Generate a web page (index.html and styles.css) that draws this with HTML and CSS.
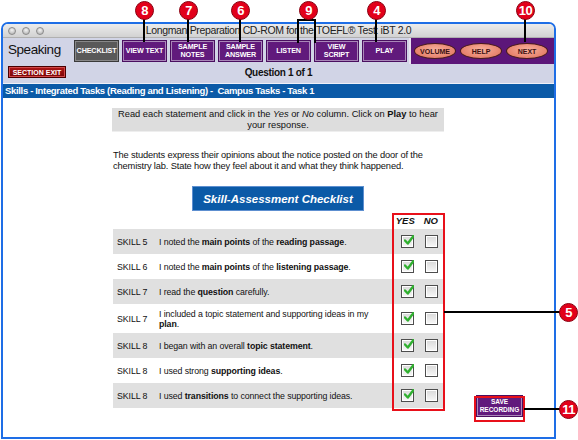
FILE: index.html
```html
<!DOCTYPE html>
<html>
<head>
<meta charset="utf-8">
<link rel="stylesheet" href="styles.css">
</head>
<body>
<div class="window">
  <div class="titlebar">
    <div class="lights"><span></span><span></span><span></span></div>
    <div class="title">Longman Preparation CD-ROM for the TOEFL® Test: iBT 2.0</div>
    <div></div>
  </div>
  <div class="toolbar">
    <div class="tool-row">
      <div class="section-name">Speaking</div>
      <div class="tools">
        <div class="btn gray">CHECKLIST</div>
        <div class="btn">VIEW TEXT</div>
        <div class="btn">SAMPLE<br>NOTES</div>
        <div class="btn">SAMPLE<br>ANSWER</div>
        <div class="btn">LISTEN</div>
        <div class="btn">VIEW<br>SCRIPT</div>
        <div class="btn">PLAY</div>
      </div>
      <div class="panel">
        <div class="oval">VOLUME</div>
        <div class="oval">HELP</div>
        <div class="oval">NEXT</div>
      </div>
    </div>
    <div class="tool-row2">
      <div class="exit">SECTION EXIT</div>
      <div class="question">Question 1 of 1</div>
      <div></div>
    </div>
  </div>
  <div class="crumb">Skills - Integrated Tasks (Reading and Listening) -&nbsp; Campus Tasks - Task 1</div>
  <div class="content">
    <div class="instructions">Read each statement and click in the <i>Yes</i> or <i>No</i> column. Click on <b>Play</b> to hear<br>your response.</div>
    <p class="prompt">The students express their opinions about the notice posted on the door of the chemistry lab. State how they feel about it and what they think happened.</p>
    <div class="heading-wrap"><div class="heading">Skill-Assessment Checklist</div></div>
    <div class="bottom">
      <div class="checklist">
        <div class="head"><span>YES</span><span>NO</span></div>
        <div class="row shade"><span class="skill">SKILL 5</span><span class="text">I noted the <b>main points</b> of the <b>reading passage</b>.</span><span class="boxes"><span class="cb on"></span><span class="cb"></span></span></div>
        <div class="row"><span class="skill">SKILL 6</span><span class="text">I noted the <b>main points</b> of the <b>listening passage</b>.</span><span class="boxes"><span class="cb on"></span><span class="cb"></span></span></div>
        <div class="row shade"><span class="skill">SKILL 7</span><span class="text">I read the <b>question</b> carefully.</span><span class="boxes"><span class="cb on"></span><span class="cb"></span></span></div>
        <div class="row tall"><span class="skill">SKILL 7</span><span class="text">I included a topic statement and supporting ideas in my <b>plan</b>.</span><span class="boxes"><span class="cb on"></span><span class="cb"></span></span></div>
        <div class="row shade"><span class="skill">SKILL 8</span><span class="text">I began with an overall <b>topic statement</b>.</span><span class="boxes"><span class="cb on"></span><span class="cb"></span></span></div>
        <div class="row"><span class="skill">SKILL 8</span><span class="text">I used strong <b>supporting ideas</b>.</span><span class="boxes"><span class="cb on"></span><span class="cb"></span></span></div>
        <div class="row shade"><span class="skill">SKILL 8</span><span class="text">I used <b>transitions</b> to connect the supporting ideas.</span><span class="boxes"><span class="cb on"></span><span class="cb"></span></span></div>
      </div>
      <div class="save">SAVE<br>RECORDING</div>
    </div>
  </div>
</div>

<div class="redbox rb-yesno"></div>
<div class="redbox rb-save"></div>

<div class="callout c8"><span class="num">8</span></div>
<div class="callout c7"><span class="num">7</span></div>
<div class="callout c6"><span class="num">6</span></div>
<div class="callout c9"><span class="num">9</span></div>
<div class="callout c4"><span class="num">4</span></div>
<div class="callout c10"><span class="num">10</span></div>
<div class="bracket9"></div>
<div class="side c5"><span class="num">5</span></div>
<div class="side c11"><span class="num">11</span></div>
</body>
</html>
```

FILE: styles.css
```css
* { box-sizing: border-box; }
html, body { margin: 0; padding: 0; }
body {
  width: 578px;
  height: 440px;
  overflow: hidden;
  background: #fff;
  position: relative;
  font-family: "Liberation Sans", Arial, sans-serif;
  color: #111;
}

.window {
  margin: 22px 0 0 1px;
  width: 555px;
  height: 417px;
  border: 2px solid #1e6ee6;
  border-radius: 7px 7px 0 0;
  overflow: hidden;
  background: #fff;
}

/* title bar */
.titlebar {
  height: 14px;
  display: grid;
  grid-template-columns: 1fr auto 1fr;
  align-items: center;
  background: linear-gradient(#ececec, #d2d2d2);
  border-bottom: 1px solid #b0b0b0;
}
.lights { display: flex; gap: 6px; padding-left: 5px; }
.lights span {
  width: 8px; height: 8px; border-radius: 50%;
  background: radial-gradient(circle at 50% 35%, #f4f4f4, #a9a9a9);
  border: 1px solid #8a8a8a;
}
.title {
  font-size: 10.5px;
  letter-spacing: -0.35px;
  color: #222;
  line-height: 13px;
}

/* toolbar */
.toolbar { background: #d1d4e6; border-bottom: 1px solid #eef0f8; }
.tool-row { display: flex; height: 26px; }
.section-name {
  width: 72px;
  padding: 4px 0 0 5px;
  font-size: 13.5px;
  letter-spacing: -0.45px;
  color: #111;
}
.tools { display: flex; gap: 5px; padding-top: 3px; }
.btn {
  width: 43px;
  height: 20px;
  background: #611a7c;
  border: 1px solid #a987b8;
  box-shadow: 0 0 0 1px #4a0f60;
  color: #fff;
  font-weight: bold;
  font-size: 7.2px;
  line-height: 8px;
  letter-spacing: -0.15px;
  display: flex;
  align-items: center;
  justify-content: center;
  text-align: center;
}
.btn.gray { background: #595959; border-color: #888; box-shadow: 0 0 0 1px #3a3a3a; }
.panel {
  margin-left: auto;
  width: 145px;
  height: 26px;
  background: #5c1679;
  border-left: 2px solid #e8e0ee;
  display: flex;
  align-items: center;
  gap: 4px;
  padding-left: 3px;
}
.oval {
  width: 42px;
  height: 16px;
  border-radius: 50%;
  background: radial-gradient(ellipse at 50% 40%, #f7b09c, #e7826c 70%, #b65847);
  border: 1px solid #4a1c1c;
  color: #3a0f12;
  font-size: 7px;
  font-weight: bold;
  display: flex;
  align-items: center;
  justify-content: center;
}
.tool-row2 {
  height: 19px;
  display: grid;
  grid-template-columns: 1fr auto 1fr;
  align-items: start;
  padding-top: 2px;
}
.exit {
  margin-left: 5px;
  width: 58px;
  height: 12px;
  background: linear-gradient(#b01616, #7a0505);
  border: 1px solid #4a0000;
  box-shadow: inset 0 0 0 1px #d24a4a;
  color: #fff;
  font-size: 7px;
  font-weight: bold;
  display: flex;
  align-items: center;
  justify-content: center;
}
.question {
  font-size: 10px;
  font-weight: bold;
  letter-spacing: -0.3px;
  line-height: 12px;
  padding-top: 1px;
}

.crumb {
  height: 14px;
  background: #0b5aa7;
  color: #fff;
  font-weight: bold;
  font-size: 9.5px;
  letter-spacing: -0.33px;
  line-height: 14px;
  padding-left: 2px;
  white-space: nowrap;
}

/* content */
.content { padding: 10px 0 0 109px; }
.instructions {
  width: 332px;
  height: 24px;
  background: #dddddd;
  border-bottom: 1px solid #eeeeee;
  font-size: 9.3px;
  line-height: 11px;
  text-align: center;
  padding: 1px 3px 0;
}
.prompt {
  margin: 18px 0 0 1px;
  width: 330px;
  font-size: 9.3px;
  letter-spacing: -0.15px;
  line-height: 11px;
}
.heading-wrap { width: 332px; display: flex; justify-content: center; margin-top: 14px; }
.heading {
  width: 172px;
  height: 25px;
  background: #0b5aa7;
  border: 1px solid #5d8fd0;
  color: #fff;
  font-weight: bold;
  font-style: italic;
  font-size: 11.5px;
  display: flex;
  align-items: center;
  justify-content: center;
}

.bottom { display: flex; align-items: flex-end; }
.checklist { width: 332px; margin-left: 1px; }
.head {
  height: 18px;
  display: flex;
  justify-content: flex-end;
  gap: 9px;
  padding: 4px 7px 0 0;
  font-size: 9.5px;
  font-weight: bold;
  font-style: italic;
}
.row {
  height: 25px;
  display: grid;
  grid-template-columns: 46px 1fr 51px;
  align-items: center;
  font-size: 8.8px;
  letter-spacing: -0.1px;
  line-height: 10px;
}
.row.tall { height: 29px; }
.row.shade { background: #e0e0e0; }
.skill { padding-left: 4px; }
.text { padding-right: 18px; }
.boxes { display: flex; gap: 11px; padding-left: 7px; }
.cb {
  width: 13px;
  height: 13px;
  border: 1px solid #4d4d4d;
  background: linear-gradient(#d9d9d9, #f8f8f8);
  box-shadow: inset 0 0 0 1px #fff;
  position: relative;
}
.cb.on::after {
  content: "";
  position: absolute;
  left: 2px;
  top: -2px;
  width: 10px;
  height: 11px;
  background: no-repeat center/contain url("data:image/svg+xml;utf8,<svg xmlns='http://www.w3.org/2000/svg' viewBox='0 0 10 10'><path d='M1 5.5 L3.8 8.5 L9.5 1' fill='none' stroke='%2330b030' stroke-width='2.4' stroke-linecap='round' stroke-linejoin='round'/></svg>");
}

.save {
  margin: 0 0 -8px 32px;
  width: 45px;
  height: 20px;
  background: #611a7c;
  border: 1px solid #a987b8;
  box-shadow: 0 0 0 1px #4a0f60;
  color: #fff;
  font-size: 6.5px;
  line-height: 8px;
  font-weight: bold;
  display: flex;
  align-items: center;
  justify-content: center;
  text-align: center;
}

/* annotation overlays */
.redbox { position: absolute; border: 2px solid #e8101a; }
.rb-yesno { left: 392px; top: 213px; width: 53px; height: 198px; }
.rb-save { left: 474px; top: 396px; width: 51px; height: 26px; }

.callout { position: absolute; top: 1px; width: 19px; height: 42px; }
.callout::after {
  content: "";
  position: absolute;
  left: 8px;
  top: 18px;
  width: 2px;
  height: 23px;
  background: #000;
}
.num {
  position: absolute;
  left: 0;
  top: 0;
  width: 19px;
  height: 19px;
  border-radius: 50%;
  background: #e2001a;
  border: 1px solid #8a0010;
  color: #fff;
  font-weight: bold;
  font-size: 13px;
  line-height: 17px;
  text-align: center;
  letter-spacing: -0.5px;
  z-index: 2;
}
.c8 { left: 135px; }
.c7 { left: 179px; }
.c6 { left: 231px; }
.c4 { left: 367px; }
.c10 { left: 516px; }
.c9 { left: 299px; }
.c9::after { display: none; }
.bracket9 {
  position: absolute;
  left: 297px;
  top: 19px;
  width: 19px;
  height: 24px;
  border: 2px solid #000;
  border-bottom: none;
}

.side { position: absolute; left: 444px; width: 134px; height: 19px; }
.side::before {
  content: "";
  position: absolute;
  left: 0;
  right: 14px;
  top: 8px;
  height: 2px;
  background: #000;
}
.side .num { left: auto; right: 0; }
.c5 { top: 303px; }
.c11 { top: 400px; left: 524px; width: 54px; }
```
